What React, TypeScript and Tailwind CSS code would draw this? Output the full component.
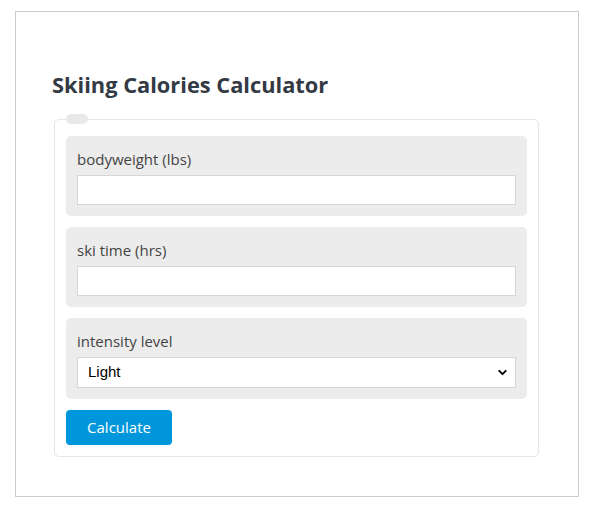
import { ChevronDown } from "lucide-react";

const fields = [
  { label: "bodyweight (lbs)", h: "h-[30px]" },
  { label: "ski time (hrs)", h: "h-[30px]" },
];

export default function App() {
  return (
    <div className="min-h-[526px] w-[600px] bg-white pl-[15px] pt-[11px]">
      <div
        className="h-[486px] w-[564px] border border-[#cccccc] pl-[38px] pr-[39px] pt-[58px]"
        style={{ fontFamily: '"Open Sans", "Noto Sans", sans-serif' }}
      >
        <h1 className="-ml-[2px] text-[21.8px] font-bold leading-[30px] text-[#333a44]">Skiing Calories Calculator</h1>
        <fieldset className="mt-[14px] rounded-[5px] border border-[#e6e6e6] px-[11px] pb-[11px]">
          <legend className="h-[10px] w-[22px] rounded-full bg-[#e8e9e8]" />
          <div className="mt-[12px] flex flex-col gap-[11px]">
            {fields.map((f) => (
              <div key={f.label} className="rounded-[5px] bg-[#ebeceb] px-[11px] pb-[11px] pt-[12px]">
                <label className="mb-[5px] block text-[15px] leading-[22px] text-[#444444]">{f.label}</label>
                <input className={`block w-full border border-[#d6d6d6] bg-white ${f.h}`} />
              </div>
            ))}
            <div className="rounded-[5px] bg-[#ebeceb] px-[11px] pb-[11px] pt-[12px]">
              <label className="mb-[5px] block text-[15px] leading-[22px] text-[#444444]">intensity level</label>
              <div className="relative">
                <select
                  className="block h-[31px] w-full appearance-none border border-[#d6d6d6] bg-white pl-[10px] text-[15px] text-black"
                  style={{ fontFamily: '"Liberation Sans", Arial, sans-serif' }}
                >
                  <option>Light</option>
                  <option>Moderate</option>
                  <option>Vigorous</option>
                </select>
                <ChevronDown
                  className="pointer-events-none absolute right-[7px] top-[9px] h-[13px] w-[13px] text-black"
                  strokeWidth={3.5}
                />
              </div>
            </div>
            <button className="h-[35px] w-[106px] rounded-[4px] bg-[#0096db] text-[15px] text-white">Calculate</button>
          </div>
        </fieldset>
      </div>
    </div>
  );
}
